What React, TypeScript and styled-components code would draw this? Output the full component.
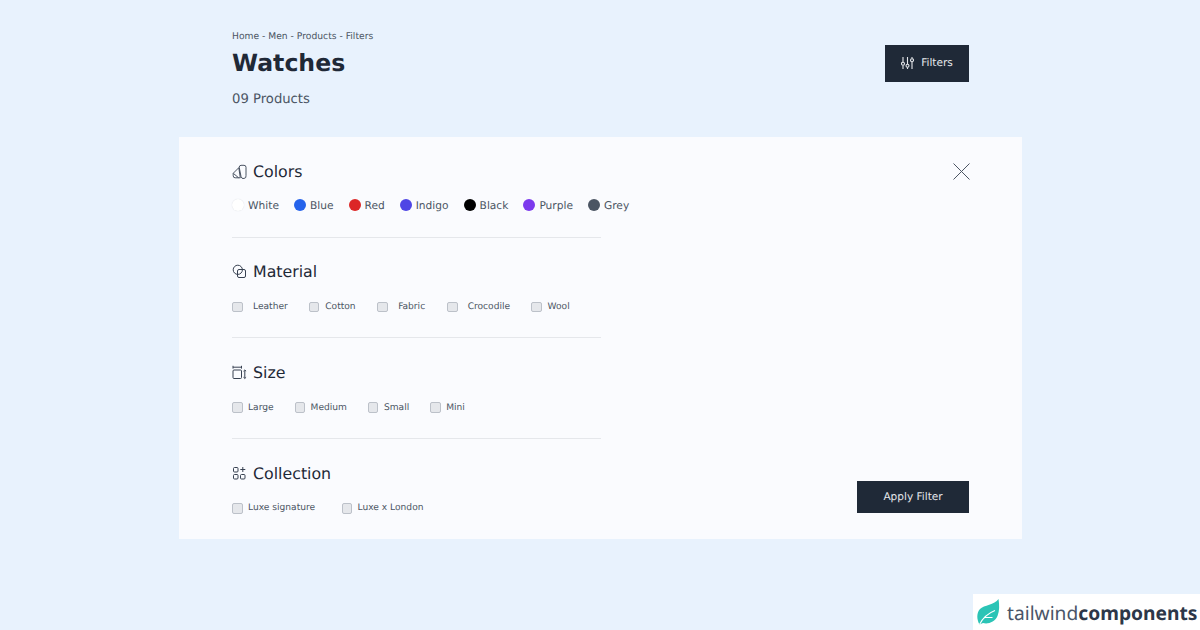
import React from "react";
import styled, { createGlobalStyle } from "styled-components";

const Global = createGlobalStyle`
  html, body { margin: 0; padding: 0; height: 630px; overflow: hidden; background: #e8f2fd; }
  body { font-family: "DejaVu Sans", sans-serif; text-rendering: geometricPrecision; }
`;

const Page = styled.div`
  position: relative;
  width: 1200px;
  height: 630px;
  box-sizing: border-box;
  padding: 30px 178px 0 179px;
`;

const Header = styled.header`
  display: flex;
  justify-content: space-between;
  align-items: flex-start;
  padding: 0 53px;
  height: 107px;
`;

const HeaderText = styled.div`
  display: flex;
  flex-direction: column;
`;

const Breadcrumb = styled.div`
  font-size: 9.2px;
  line-height: 13px;
  color: #4b5563;
`;

const Title = styled.h1`
  margin: 4px 0 0;
  font-size: 23.6px;
  line-height: 32px;
  font-weight: 700;
  color: #1f2937;
`;

const Count = styled.div`
  margin-top: 11px;
  font-size: 13.2px;
  line-height: 20px;
  color: #4b5563;
`;

const DarkButton = styled.button<{ $w: number; $h: number }>`
  display: flex;
  align-items: center;
  justify-content: center;
  gap: 7px;
  width: ${(p) => p.$w}px;
  height: ${(p) => p.$h}px;
  border: 0;
  padding: 0;
  background: #1f2937;
  color: #e5e7eb;
  font-family: inherit;
  font-size: 10.55px;
  text-rendering: geometricPrecision;
`;

const FilterButton = styled(DarkButton)`
  margin-top: 15px;
`;

const Panel = styled.section`
  display: flex;
  justify-content: space-between;
  height: 402px;
  box-sizing: border-box;
  padding: 0 53px;
  background: #fafbfe;
`;

const Filters = styled.div`
  width: 400px;
  padding-top: 23px;
`;

const Group = styled.div<{ $last?: boolean }>`
  width: 369px;
  height: ${(p) => (p.$last ? "auto" : "76.7px")};
  margin-bottom: ${(p) => (p.$last ? "0" : "23px")};
  border-bottom: ${(p) => (p.$last ? "0" : "1px solid #e5e7eb")};
`;

const GroupTitle = styled.h2`
  display: flex;
  align-items: center;
  gap: 6px;
  margin: 0;
  height: 22px;
  font-size: 15.8px;
  font-weight: 400;
  color: #1f2937;
  svg { flex: none; color: #374151; }
`;

const Options = styled.div`
  display: flex;
  align-items: center;
  height: 14px;
  margin-top: 17.3px;
  white-space: nowrap;
`;

const ColorRow = styled(Options)`
  margin-top: 16px;
`;

const ColorOption = styled.label`
  display: flex;
  align-items: center;
  gap: 4px;
  margin-right: 15px;
  font-size: 10.65px;
  color: #4b5563;
`;

const Dot = styled.span<{ $c: string }>`
  width: 12px;
  height: 12px;
  border-radius: 50%;
  background: ${(p) => p.$c};
  box-shadow: ${(p) => (p.$c === "#ffffff" ? "0 0 1px #d1d5db" : "none")};
`;

const CheckOption = styled.label<{ $gap: number; $after: number }>`
  display: flex;
  align-items: center;
  gap: ${(p) => p.$gap}px;
  margin-right: ${(p) => p.$after}px;
  font-size: 9.1px;
  color: #4b5563;
`;

const Box = styled.input.attrs({ type: "checkbox" })`
  appearance: none;
  box-sizing: border-box;
  width: 10.5px;
  height: 10.5px;
  margin: 0;
  border: 1px solid #bcc1c9;
  border-radius: 2px;
  background: #e5e7eb;
`;

const Side = styled.div`
  display: flex;
  flex-direction: column;
  justify-content: space-between;
  align-items: flex-end;
  padding: 26px 0;
`;

const Close = styled.button`
  display: block;
  width: 17px;
  height: 17px;
  margin-right: -1px;
  padding: 0;
  border: 0;
  background: none;
  color: #4b5563;
`;

const ApplyButton = styled(DarkButton)``;

const Badge = styled.div`
  position: absolute;
  right: 0;
  bottom: 0;
  display: flex;
  align-items: center;
  gap: 7px;
  width: 227px;
  height: 36px;
  box-sizing: border-box;
  padding-left: 3px;
  background: #ffffff;
  font-family: "Noto Sans", sans-serif;
  font-size: 19.2px;
  color: #4a5568;
  white-space: nowrap;
  svg { flex: none; }
  b { font-weight: 700; color: #2d3748; }
`;

const ColorsIcon = () => (
  <svg width="15" height="15" viewBox="0 0 15 15" fill="none" stroke="currentColor" strokeWidth="0.9" strokeLinejoin="round">
    <path d="M1.200 9.300 6.800 3.700 8.300 13.800H3.200A2 2 0 0 1 1.200 11.800Z" />
    <path d="M1.500 9.500 6.500 13.700" />
    <path d="M7.200 3.300A2 2 0 0 1 9 1.300H12A2 2 0 0 1 14 3.300V11.500A2.500 2.500 0 0 1 9 12.500L7.200 3.300Z" />
  </svg>
);

const MaterialIcon = () => (
  <svg width="15" height="15" viewBox="0 0 15 15" fill="none" stroke="currentColor" strokeWidth="1">
    <circle cx="5.800" cy="5.800" r="4.600" />
    <rect x="5.500" y="5.500" width="8" height="8" rx="1.500" />
  </svg>
);

const SizeIcon = () => (
  <svg width="15" height="15" viewBox="0 0 15 15" fill="none" stroke="currentColor" strokeWidth="1">
    <rect x="1" y="5" width="8.500" height="8.500" rx="1" />
    <path d="M1 .8V3.600M9.500 .8V3.600M1 2.200H9.500M12.800 5.500V13M11.500 6.200 12.800 5 14.100 6.200M11.500 12.300 12.800 13.500 14.100 12.300" />
  </svg>
);

const CollectionIcon = () => (
  <svg width="15" height="15" viewBox="0 0 15 15" fill="none" stroke="currentColor" strokeWidth="1">
    <rect x="1.500" y="1.500" width="4.500" height="4.500" rx="1" />
    <rect x="1.500" y="8.500" width="4.500" height="4.500" rx="1" />
    <rect x="8.500" y="8.500" width="4.500" height="4.500" rx="1" />
    <path d="M10.800 1V6M8.300 3.500H13.300" />
  </svg>
);

const SlidersIcon = () => (
  <svg width="13" height="14" viewBox="0 0 13 14" fill="none" stroke="currentColor" strokeWidth="1.100">
    <path d="M2 1V6M2 9.500V13M6.500 1V8M6.500 11.500V13M11 1V2.500M11 6V13" />
    <circle cx="2" cy="7.700" r="1.500" />
    <circle cx="6.500" cy="9.700" r="1.500" />
    <circle cx="11" cy="4.200" r="1.500" />
  </svg>
);

const Leaf = () => (
  <svg width="24" height="26" viewBox="0 0 24 26">
    <path fill="#2bc4b6" d="M22.500 0C23.500 6 23.500 12 21.500 17 19 23 12 25.500 7 24L3.500 25.500C.5 20 .5 14 4 10 8 6 18.500 6 22.500 0Z" />
    <path fill="none" stroke="#fff" strokeWidth="1.100" d="M3.500 25.500C6.500 19.500 10 15 19 11.500M9 18.500H16.500" />
  </svg>
);

const colors = [
  ["White", "#ffffff"],
  ["Blue", "#2563eb"],
  ["Red", "#dc2626"],
  ["Indigo", "#4f46e5"],
  ["Black", "#000000"],
  ["Purple", "#7c3aed"],
  ["Grey", "#4b5563"],
];

type Check = [string, number, number];
const material: Check[] = [["Leather", 10.500, 21], ["Cotton", 6, 21.500], ["Fabric", 10.500, 22], ["Crocodile", 10, 21], ["Wool", 6, 0]];
const size: Check[] = [["Large", 5.500, 21], ["Medium", 5.500, 21], ["Small", 5.500, 21], ["Mini", 5.500, 0]];
const collection: Check[] = [["Luxe signature", 5.500, 26.500], ["Luxe x London", 5.500, 0]];

const Checks = ({ items }: { items: Check[] }) => (
  <Options>
    {items.map(([name, gap, after]) => (
      <CheckOption key={name} $gap={gap} $after={after}>
        <Box />
        {name}
      </CheckOption>
    ))}
  </Options>
);

export default function App() {
  return (
    <Page>
      <Global />
      <Header>
        <HeaderText>
          <Breadcrumb>Home - Men - Products - Filters</Breadcrumb>
          <Title>Watches</Title>
          <Count>09 Products</Count>
        </HeaderText>
        <FilterButton $w={84} $h={36.5}>
          <SlidersIcon />
          Filters
        </FilterButton>
      </Header>
      <Panel>
        <Filters>
          <Group>
            <GroupTitle><ColorsIcon />Colors</GroupTitle>
            <ColorRow>
              {colors.map(([name, c]) => (
                <ColorOption key={name}>
                  <Dot $c={c} />
                  {name}
                </ColorOption>
              ))}
            </ColorRow>
          </Group>
          <Group>
            <GroupTitle><MaterialIcon />Material</GroupTitle>
            <Checks items={material} />
          </Group>
          <Group>
            <GroupTitle><SizeIcon />Size</GroupTitle>
            <Checks items={size} />
          </Group>
          <Group $last>
            <GroupTitle><CollectionIcon />Collection</GroupTitle>
            <Checks items={collection} />
          </Group>
        </Filters>
        <Side>
          <Close aria-label="Close">
            <svg width="17" height="17" viewBox="0 0 17 17" stroke="currentColor" strokeWidth="1">
              <path d="M.5.5 16.500 16.500M16.500.5 .5 16.500" />
            </svg>
          </Close>
          <ApplyButton $w={112} $h={32}>Apply Filter</ApplyButton>
        </Side>
      </Panel>
      <Badge>
        <Leaf />
        <span>tailwind<b>components</b></span>
      </Badge>
    </Page>
  );
}
